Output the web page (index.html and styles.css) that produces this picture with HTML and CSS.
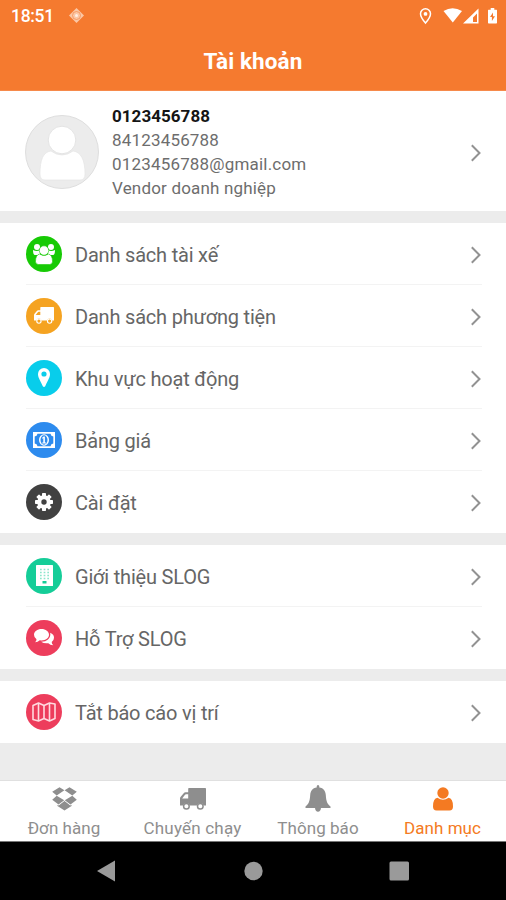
FILE: index.html
```html
<!DOCTYPE html>
<html lang="vi">
<head>
<meta charset="utf-8">
<title>Tài khoản</title>
<link rel="stylesheet" href="styles.css">
</head>
<body>
<svg class="defs" width="0" height="0">
  <symbol id="chevron" viewBox="0 0 12 18"><path d="M1.8 1.2 9.5 9l-7.700 7.800" fill="none" stroke="#929292" stroke-width="2"/></symbol>
  <symbol id="truck" viewBox="0 0 26 22"><path fill="currentColor" fill-rule="evenodd" d="M9 0h16.200q.8 0 .8.8V17.600h-2.300a3.500 3.500 0 0 0-6.800 0H9.800a3.500 3.500 0 0 0-6.800 0H0V10.500q0-1 .7-1.800l3-3.500q.7-.9 1.800-.9H8.200V.8Q8.200 0 9 0zM2.200 10.500h6V6.200H6q-.6 0-1 .5z"/><g fill="none" stroke="currentColor" stroke-width="1.500"><circle cx="6.400" cy="18.300" r="2.800"/><circle cx="20.300" cy="18.300" r="2.800"/></g></symbol>
</svg>
<header class="header">
  <div class="status">
    <span class="time">18:51</span>
    <svg class="gps" width="15" height="15" viewBox="0 0 15 15"><path d="M7.500 0 15 7.500 7.500 15 0 7.500z" fill="#fbc7a5"/><circle cx="7.500" cy="7.500" r="4" fill="none" stroke="#f5894a" stroke-width=".7"/><circle cx="7.500" cy="7.500" r="1.500" fill="#fff0e5"/></svg>
    <svg class="system" width="82" height="18" viewBox="0 0 82 18" fill="#fff">
      <path d="M9.500 1.700a5 5 0 0 1 5 5c0 3.500-5 9.300-5 9.300s-5-5.800-5-9.300a5 5 0 0 1 5-5z" fill="none" stroke="#fff" stroke-width="1.500"/><circle cx="9.500" cy="6.900" r="1.900"/>
      <path d="M27.500 4Q36.500-1.500 46 4L36.800 15.500z"/>
      <path d="M62.500 1.500V16.500H47zM61 6.500 57 10.500V15h4z" fill-rule="evenodd"/>
      <path d="M72.500 2.800h2.200V1h3.600v1.800h2.200q.5 0 .5.700v12.300q0 .7-.7.700h-7.600q-.7 0-.7-.7V3.500q0-.7.500-.7zM77 5.500l-3 4.500h1.900v4L79 9.200h-2z" fill-rule="evenodd"/>
    </svg>
  </div>
  <h1 class="title">Tài khoản</h1>
</header>
<main class="content">
  <section class="profile">
    <svg class="avatar" width="74" height="74" viewBox="0 0 74 74"><circle cx="37" cy="37" r="36.500" fill="#ececec" stroke="#dedede"/><path fill="#fff" stroke="#e3e3e3" stroke-width=".6" d="M26 36q5 4 11 4t11-4c8 1 12 9 12 23q0 6-5 6H20q-5 0-5-6c0-14 3-22 11-23z"/><circle cx="37" cy="25" r="13.800" fill="#fff" stroke="#e4e4e4"/></svg>
    <div class="details">
      <div class="name">0123456788</div>
      <div>84123456788</div>
      <div>0123456788@gmail.com</div>
      <div>Vendor doanh nghiệp</div>
    </div>
    <svg class="chevron"><use href="#chevron"/></svg>
  </section>
  <section class="group">
    <div class="row"><span class="badge green"><svg width="24" height="22" viewBox="0 0 24 22" fill="#fff"><circle cx="5" cy="4" r="3"/><circle cx="19" cy="4" r="3"/><path d="M1 7q4 2 7 0v5H3q-2 0-2-5zM23 7q-4 2-7 0v5h5q2 0 2-5z"/><g stroke="#17ca05" stroke-width=".6"><path d="M7.500 11q4.500 3 9 0 4 1 4 7.500 0 3-3 3h-11q-3 0-3-3Q3.500 12 7.500 11z"/><circle cx="12" cy="7.500" r="4.700"/></g></svg></span><span class="label">Danh sách tài xế</span><svg class="chevron"><use href="#chevron"/></svg></div>
    <div class="row"><span class="badge amber"><svg width="20" height="17"><use href="#truck"/></svg></span><span class="label">Danh sách phương tiện</span><svg class="chevron"><use href="#chevron"/></svg></div>
    <div class="row"><span class="badge cyan"><svg width="12" height="19" viewBox="0 0 12 19"><path fill="#fff" fill-rule="evenodd" d="M6 0a6 6 0 0 1 6 6c0 3-1.200 4.500-4.800 12.200q-1.200 1.500-2.400 0C1.200 10.500 0 9 0 6a6 6 0 0 1 6-6zm0 3.400a2.600 2.600 0 1 0 0 5.200 2.600 2.600 0 0 0 0-5.200z"/></svg></span><span class="label">Khu vực hoạt động</span><svg class="chevron"><use href="#chevron"/></svg></div>
    <div class="row"><span class="badge blue"><svg width="22" height="16" viewBox="0 0 22 16"><path d="M0 0h22v16H0z" fill="#fff"/><path d="M4.500 1.700h13q.4 2.500 2.800 2.800v7q-2.400.3-2.800 2.800h-13q-.4-2.500-2.800-2.800v-7q2.400-.3 2.800-2.800z" fill="#2d8bee"/><ellipse cx="11" cy="8" rx="5" ry="5.800" fill="#fff"/><ellipse cx="11" cy="8" rx="3.500" ry="4.700" fill="#2d8bee"/><path d="M9 6l1.500-1.500h1.400v6H13v1.100H9.200v-1.100h1.100V6.200l-.7.600z" fill="#fff"/></svg></span><span class="label">Bảng giá</span><svg class="chevron"><use href="#chevron"/></svg></div>
    <div class="row"><span class="badge dark"><svg width="18" height="18" viewBox="0 0 18 18"><g fill="#fff"><g id="teeth"><rect x="7" y="0" width="4" height="18" rx=".7"/><rect x="0" y="7" width="18" height="4" rx=".7"/></g><use href="#teeth" transform="rotate(45 9 9)"/><circle cx="9" cy="9" r="6.800"/></g><circle cx="9" cy="9" r="2.700" fill="#414141"/></svg></span><span class="label">Cài đặt</span><svg class="chevron"><use href="#chevron"/></svg></div>
  </section>
  <section class="group">
    <div class="row"><span class="badge teal"><svg width="17" height="21" viewBox="0 0 17 21"><rect width="17" height="21" rx=".6" fill="#fff"/><path d="M4 4.500h9M4 7.500h9M4 10.500h9M4 13.500h9" stroke="#8ce6cc" stroke-width="1.500" stroke-dasharray="1.700 1.950"/><path d="M6.500 16h4v2.500h-4z" fill="#15cd98"/></svg></span><span class="label">Giới thiệu SLOG</span><svg class="chevron"><use href="#chevron"/></svg></div>
    <div class="row"><span class="badge red"><svg width="20" height="17" viewBox="0 0 20 17" fill="#fff"><path d="M7.500 0c4.200 0 7.500 2.500 7.500 5.700s-3.300 5.700-7.500 5.700l-1.700-.1Q3.700 13.200 1 13.300q1.500-1.200 1.500-3Q0 8.500 0 5.700C0 2.500 3.300 0 7.500 0z"/><path d="M16.200 3.800q3.800 1.600 3.800 4.900 0 2.700-2.300 4.300 0 2 1.500 3.300-3-.1-4.900-2.100-4.300.6-7.200-1.500 4.300.1 6.900-2.200 2.900-2.500 2.200-6.700z"/></svg></span><span class="label">Hỗ Trợ SLOG</span><svg class="chevron"><use href="#chevron"/></svg></div>
  </section>
  <section class="group">
    <div class="row"><span class="badge red"><svg width="24" height="20" viewBox="0 0 24 20" fill="none" stroke="#ffd9df" stroke-width="1.600" stroke-linejoin="round"><path d="M1 3.500 6.500 1 12 3.500 17.500 1 23 2v14.500L17.500 19 12 16.500 6.500 19 1 17.500z"/><path d="M6.500 1v18M12 3.500v13M17.500 1v18"/></svg></span><span class="label">Tắt báo cáo vị trí</span><svg class="chevron"><use href="#chevron"/></svg></div>
  </section>
</main>
<nav class="tabs">
  <div class="tab"><svg width="25" height="24" viewBox="0 0 25 24" fill="currentColor"><g id="flaps"><path d="M.2 4.700 7.500.3l4.900 3L4.700 8.600zM.2 12.700 4.700 8.800l7.500 4.400-5.700 4.200z"/></g><use href="#flaps" transform="matrix(-1 0 0 1 25 0)"/><path d="M5.500 17.700l1.300.7 5.700-4.400 5.700 4.400 1.300-.7v1.400l-7 4.500-7-4.500z"/><path d="M7.500 18.400l5-3.900 5 3.900-5 3.600z"/></svg><span>Đơn hàng</span></div>
  <div class="tab"><svg width="26" height="22"><use href="#truck"/></svg><span class="wide">Chuyến chạy</span></div>
  <div class="tab"><svg width="26" height="28" viewBox="0 0 26 28" fill="currentColor"><path d="M13 0q1.300 0 1.300 1.500v1C18.500 3 20.500 6 20.800 10c.4 6.500 1.500 9 4.700 11.500v1.500H.5v-1.500C3.700 19 4.800 16.500 5.200 10 5.500 6 7.500 3 11.700 2.500v-1Q11.700 0 13 0zM10 23h6q-.5 3.800-3 3.800t-3-3.800z"/></svg><span>Thông báo</span></div>
  <div class="tab active"><svg width="20" height="24" viewBox="0 0 20 24" fill="currentColor"><circle cx="10" cy="6" r="5.700"/><path d="M4.500 10.800q5.500 4 11 0 4.500.5 4.500 8.700 0 4-3.500 4h-13q-3.500 0-3.500-4 0-8.200 4.500-8.700z"/></svg><span>Danh mục</span></div>
</nav>
<footer class="system-nav">
  <svg width="506" height="58" viewBox="0 0 506 58" fill="#9a9a9a"><path d="M97 29 115 18.500v21z"/><circle cx="253.500" cy="29" r="9.200"/><rect x="389.500" y="19.500" width="19.500" height="19" rx="1.500"/></svg>
</footer>
</body>
</html>
```
FILE: styles.css
```css
* { box-sizing: border-box; }
body { margin: 0; width: 506px; height: 900px; overflow: hidden; display: flex; flex-direction: column; background: #ececec; font-family: Roboto, "Liberation Sans", sans-serif; }
svg { display: block; flex: none; }
.defs { position: absolute; }
.header { height: 91px; background: #f57a2f; color: #fff; flex: none; border-bottom: 1px solid #f68a4b; }
.status { height: 32px; display: flex; align-items: center; padding: 0 8px 0 11px; }
.time { font-size: 17.5px; font-weight: 500; width: 43px; letter-spacing: -.3px; }
.gps { margin-left: 15px; margin-top: -1px; }
.system { margin-left: auto; margin-top: -1px; }
.title { margin: 0; height: 59px; line-height: 59px; text-align: center; font-size: 22.5px; font-weight: 700; letter-spacing: .1px; }
.content { flex: 1; display: flex; flex-direction: column; gap: 12px; min-height: 0; }
.profile { height: 120px; background: #fff; display: flex; align-items: center; padding: 1px 24px 0 25px; }
.details { margin-left: 13px; flex: 1; font-size: 17px; line-height: 24px; color: #6d6d6d; letter-spacing: .18px; }
.name { color: #151515; font-weight: 700; letter-spacing: .05px; }
.chevron { width: 12px; height: 18px; margin-left: auto; position: relative; top: 1px; }
.group { background: #fff; padding: 0 24px 0 26px; }
.row { height: 62px; display: flex; align-items: center; border-bottom: 1px solid #f3f3f3; }
.row:last-child { border-bottom-color: transparent; }
.badge { width: 36px; height: 36px; border-radius: 50%; display: flex; align-items: center; justify-content: center; color: #fff; }
.green { background: #17ca05; }
.amber { background: #f5a321; }
.cyan { background: #08cdeb; }
.blue { background: #2d8bee; }
.dark { background: #414141; }
.teal { background: #15cd98; }
.red { background: #ed3d5c; }
.label { margin: 3px 0 0 13px; font-size: 20px; line-height: 26px; color: #666; letter-spacing: -.2px; }
.tabs { height: 62px; flex: none; background: #fff; border-top: 1px solid #e0e0e0; border-bottom: 1px solid #777; display: grid; grid-template-columns: 128px 129px 122px 127px; color: #8e8e8e; }
.tab { display: grid; grid-template-rows: 36px 22px; justify-items: center; align-items: center; font-size: 17px; line-height: 22px; letter-spacing: .05px; }
.wide { letter-spacing: .2px; }
.active { color: #f47a22; }
.system-nav { height: 58px; flex: none; background: #000; }
```
